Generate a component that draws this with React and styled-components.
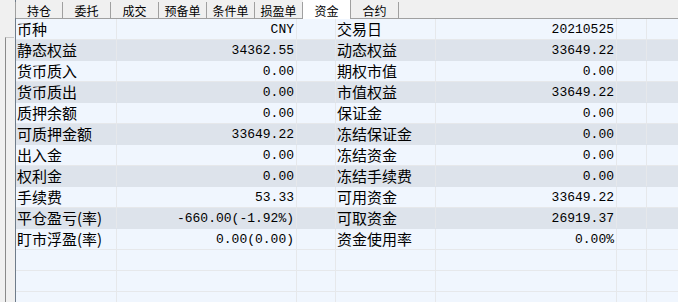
import React from 'react';
import styled, { createGlobalStyle } from 'styled-components';

const tabs = ['持仓', '委托', '成交', '预备单', '条件单', '损盈单', '资金', '合约'];

const rows = [
  ['币种', 'CNY', '交易日', '20210525'],
  ['静态权益', '34362.55', '动态权益', '33649.22'],
  ['货币质入', '0.00', '期权市值', '0.00'],
  ['货币质出', '0.00', '市值权益', '33649.22'],
  ['质押余额', '0.00', '保证金', '0.00'],
  ['可质押金额', '33649.22', '冻结保证金', '0.00'],
  ['出入金', '0.00', '冻结资金', '0.00'],
  ['权利金', '0.00', '冻结手续费', '0.00'],
  ['手续费', '53.33', '可用资金', '33649.22'],
  ['平仓盈亏(率)', '-660.00(-1.92%)', '可取资金', '26919.37'],
  ['盯市浮盈(率)', '0.00(0.00)', '资金使用率', '0.00%'],
];

const EMPTY_ROWS = 3;

export default function App() {
  const selected = '资金';
  const all = [...rows, ...Array.from({ length: EMPTY_ROWS }, () => null)];

  return (
    <>
      <GlobalStyle />
      <Window>
        <SideStrip>
          <SideBox />
        </SideStrip>
        <Main>
          <TabBar>
            {tabs.map(t => (
              <Tab key={t} active={t === selected}>{t}</Tab>
            ))}
          </TabBar>
          <Table>
            {all.map((r, i) => (
              <Row key={i} shaded={r !== null && i % 2 === 1}>
                <Label>{r ? r[0] : ''}</Label>
                <Value>{r ? r[1] : ''}</Value>
                <Cell />
                <Label>{r ? r[2] : ''}</Label>
                <Value>{r ? r[3] : ''}</Value>
                <Cell />
                <Cell last />
              </Row>
            ))}
          </Table>
        </Main>
      </Window>
    </>
  );
}

const GlobalStyle = createGlobalStyle`
  html, body {
    margin: 0;
    padding: 0;
    background: #f0f0f0;
    overflow: hidden;
  }
`;

const Window = styled.div`
  width: 678px;
  height: 302px;
  display: grid;
  grid-template-columns: 15px 1fr;
  overflow: hidden;
  font-family: "Noto Sans CJK SC", sans-serif;
  color: #000;
`;

const SideStrip = styled.div`
  background: #f0f0f0;
  padding: 37px 1px 0 5px;
  display: flex;
  flex-direction: column;
`;

const SideBox = styled.div`
  flex: 1;
  border-left: 1px solid #8a8a8a;
  border-top: 1px solid #c8c8c8;
  background: #f0f0f0;
`;

const Main = styled.div`
  display: flex;
  flex-direction: column;
  min-width: 0;
  border-left: 1px solid #6f7c8a;
`;

const TabBar = styled.div`
  height: 18px;
  display: flex;
  background: #f0f0f0;
  border-bottom: 1px solid #a0a0a0;
`;

const Tab = styled.div`
  width: 48px;
  box-sizing: border-box;
  margin-top: ${p => (p.active ? '0' : '2px')};
  margin-bottom: ${p => (p.active ? '-1px' : '0')};
  border-right: 1px solid #a0a0a0;
  background: ${p => (p.active ? '#ffffff' : '#f0f0f0')};
  font-size: 12px;
  line-height: ${p => (p.active ? '21px' : '18px')};
  text-align: center;
  white-space: nowrap;
  &:first-child {
    margin-left: -1px;
    border-left: 1px solid #a0a0a0;
  }
`;

const Table = styled.div`
  flex: 1;
  background: #f0f6fe;
  overflow: hidden;
`;

const Row = styled.div`
  display: grid;
  grid-template-columns: 101px 180px 39px 100px 181px 30px 1fr;
  height: 21px;
  box-sizing: border-box;
  border-bottom: 1px solid ${p => (p.shaded ? '#dde3eb' : '#e6e8eb')};
  background: ${p => (p.shaded ? '#dde3eb' : '#f0f6fe')};
`;

const Cell = styled.div`
  box-sizing: border-box;
  border-right: ${p => (p.last ? 'none' : '1px solid #e6e8eb')};
  height: 20px;
`;

const Label = styled(Cell)`
  padding-left: 1px;
  font-size: 15px;
  line-height: 20px;
  white-space: nowrap;
  overflow: hidden;
`;

const Value = styled(Cell)`
  padding-right: 2px;
  text-align: right;
  font-family: "Liberation Mono", "Noto Sans CJK SC", monospace;
  font-size: 13px;
  line-height: 21px;
  white-space: nowrap;
`;
